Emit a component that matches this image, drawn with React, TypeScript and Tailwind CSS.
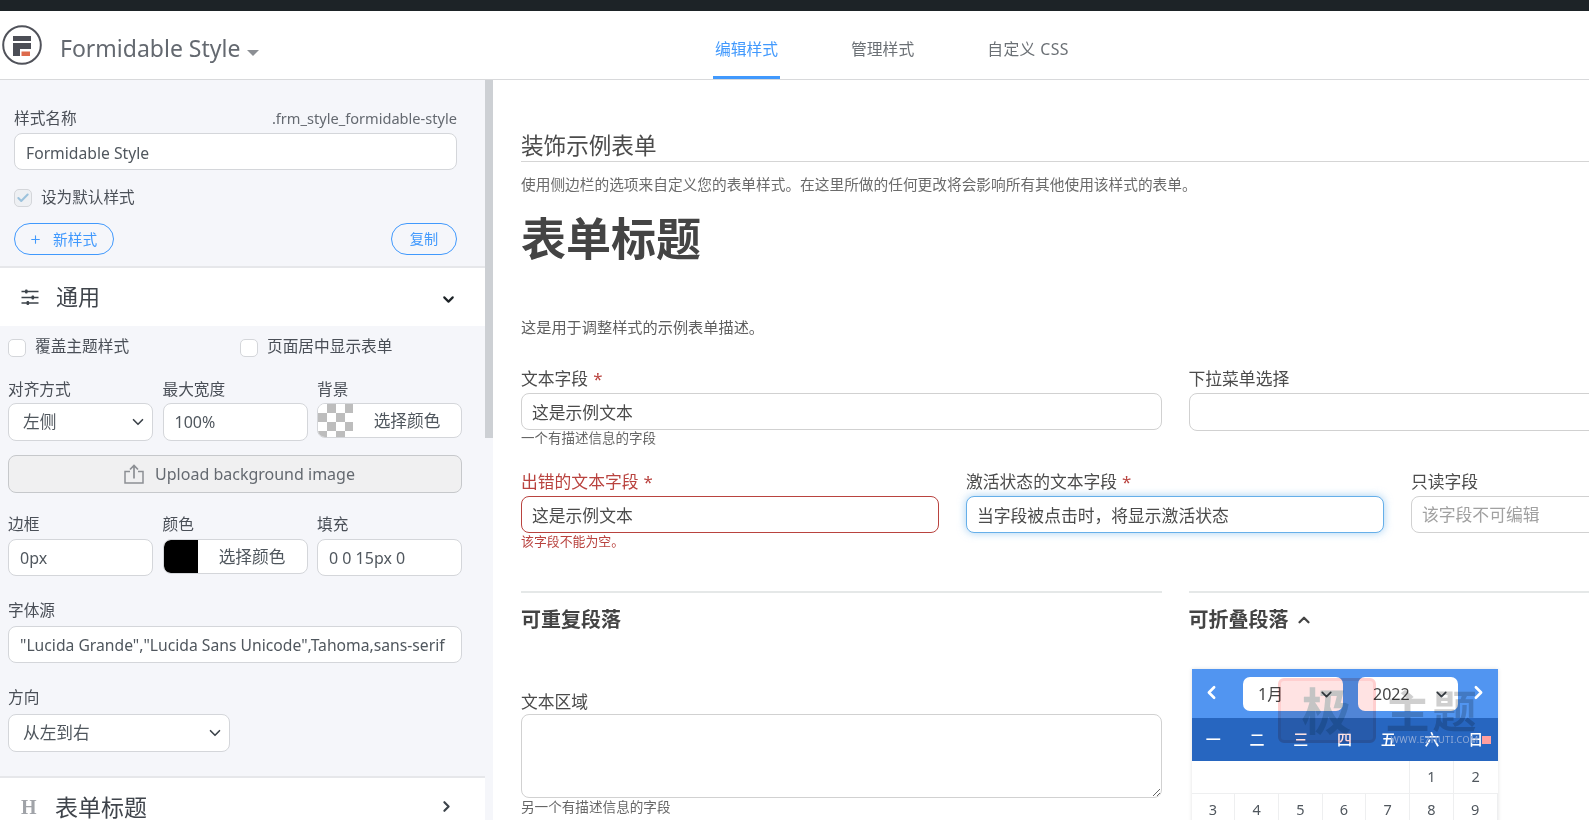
import React from "react";
import { ChevronDown, ChevronLeft, ChevronRight, ChevronUp, Check, Plus } from "lucide-react";

const inputCls =
  "block w-full rounded-[8px] border border-[#d4d6da] bg-white px-[11px] text-[#50575e] outline-none";

function SideLabel({ children }: { children: React.ReactNode }) {
  return <div className="h-[20px] text-[15.7px] leading-[20px] text-[#4a4f57]">{children}</div>;
}

function SideSelect({ value, className = "" }: { value: string; className?: string }) {
  return (
    <div className={`relative ${className}`}>
      <select className="block h-[38px] w-full appearance-none rounded-[8px] border border-[#d4d6da] bg-white pl-[14px] text-[16.7px] text-[#50575e] outline-none">
        <option>{value}</option>
      </select>
      <ChevronDown className="pointer-events-none absolute right-[6px] top-[10px] h-[18px] w-[18px] text-[#3c434a]" strokeWidth={2.2} />
    </div>
  );
}

function ColorPick({ swatch }: { swatch: React.ReactNode }) {
  return (
    <div className="flex h-[35px] items-stretch overflow-hidden rounded-[8px] border border-[#d4d6da] bg-white">
      {swatch}
      <div className="flex flex-1 items-center justify-center text-[16.7px] text-[#50575e]">选择颜色</div>
    </div>
  );
}

function EmptyBox() {
  return <span className="mt-[1px] block h-[18px] w-[18px] shrink-0 rounded-[5px] border border-[#d4d6da] bg-white" />;
}

function SlidersIcon() {
  return (
    <svg width="18" height="16" viewBox="0 0 18 16" fill="none" className="shrink-0 text-[#3c434a]">
      <path d="M0.5 2.5H17.5M0.5 8.5H17.5M0.5 14H17.5" stroke="currentColor" strokeWidth="1.3" />
      <rect x="4" y="0.5" width="2.6" height="4" rx="1" fill="currentColor" />
      <rect x="10.5" y="6.5" width="2.6" height="4" rx="1" fill="currentColor" />
      <rect x="5.5" y="12" width="2.6" height="4" rx="1" fill="currentColor" />
    </svg>
  );
}

function UploadIcon() {
  return (
    <svg width="20" height="20" viewBox="0 0 20 20" fill="none" className="text-[#8c8f94]">
      <path d="M6 7.5H1V19H19V7.5H14" stroke="currentColor" strokeWidth="1.5" />
      <path d="M10 14.5V1.5M6 5.5L10 1.5L14 5.5" stroke="currentColor" strokeWidth="1.7" />
    </svg>
  );
}

function Logo() {
  return (
    <svg width="40" height="40" viewBox="0 0 40 40" fill="none" className="shrink-0">
      <circle cx="20" cy="20" r="18.8" stroke="#50525a" strokeWidth="2" />
      <rect x="11" y="11" width="18" height="5" fill="#4c4e56" />
      <path d="M11 18H29V24H18V31H11Z" fill="#4c4e56" />
      <rect x="19.5" y="26.5" width="8.5" height="4.5" fill="#dd6a4c" />
    </svg>
  );
}

function MainLabel({ children, required, error }: { children: React.ReactNode; required?: boolean; error?: boolean }) {
  return (
    <div className={`h-[24px] text-[16.8px] leading-[24px] ${error ? "text-[#b9433f]" : "text-[#4b4b4b]"}`}>
      {children}
      {required && <span className="ml-[5px] text-[#b9433f]">*</span>}
    </div>
  );
}

const mainInput =
  "mt-[2px] block w-full rounded-[8px] border bg-white px-[10px] text-[16.8px] text-[#4b4b4b] outline-none placeholder:text-[#a1a1a1]";

const weekdays = ["一", "二", "三", "四", "五", "六", "日"];
const row1 = ["", "", "", "", "", "1", "2"];
const row2 = ["3", "4", "5", "6", "7", "8", "9"];

function Calendar() {
  return (
    <div className="relative mt-[35px] w-[306px] shadow-[0_0_4px_rgba(0,0,0,0.12)]">
      <div className="relative flex h-[49px] items-start justify-center gap-[15px] bg-[#5195f1] pl-[12px] pt-[8px]">
        <ChevronLeft className="absolute left-[9px] top-[13px] h-[21px] w-[21px] text-white" strokeWidth={3} />
        <div className="flex h-[34px] w-[100px] items-center justify-between rounded-[7px] bg-white pl-[15px] pr-[8px] text-[16px] text-[#444]">
          1月
          <ChevronDown className="h-[17px] w-[17px] text-[#3c434a]" strokeWidth={2.4} />
        </div>
        <div className="flex h-[34px] w-[100px] items-center justify-between rounded-[7px] bg-white pl-[15px] pr-[8px] text-[16px] text-[#444]">
          2022
          <ChevronDown className="h-[17px] w-[17px] text-[#3c434a]" strokeWidth={2.4} />
        </div>
        <ChevronRight className="absolute right-[9px] top-[13px] h-[21px] w-[21px] text-white" strokeWidth={3} />
      </div>
      <div className="grid h-[43px] grid-cols-7 items-center bg-[#2766c0] text-center text-[15px] font-medium text-white">
        {weekdays.map((d) => (
          <div key={d}>{d}</div>
        ))}
      </div>
      <div className="grid grid-cols-7 bg-white text-center text-[14.5px] text-[#50575e]">
        {row1.map((d, i) => (
          <div
            key={i}
            className={`flex h-[33px] items-center justify-center border-b border-[#eeeff0] ${i >= 4 && i < 6 ? "border-r" : ""}`}
          >
            {d}
          </div>
        ))}
        {row2.map((d) => (
          <div key={d} className="flex h-[33px] items-center justify-center border-b border-r border-[#eeeff0]">
            {d}
          </div>
        ))}
      </div>
      {/* site watermark laid over the calendar */}
      <div className="pointer-events-none absolute left-[86px] top-[9px] flex h-[65px] w-[98px] items-center justify-center rounded-[6px] border-[3px] border-[#ffcfcf] bg-[#ffe3e3] mix-blend-multiply">
        <span className="text-[50px] font-bold leading-[56px] text-[#c4c4c4]">极</span>
      </div>
      <div className="pointer-events-none absolute left-[194px] top-[19px] flex gap-[3px] text-[44px] font-bold leading-[46px] text-[#cfcfcf] mix-blend-multiply">
        <span>主</span>
        <span>题</span>
      </div>
      <div className="pointer-events-none absolute left-[199px] top-[66px] flex items-center gap-[3px] text-[9px] leading-[10px] tracking-[0.5px] text-[#8fa9d6]">
        WWW.EZHUTI.COM
        <span className="h-[8px] w-[9px] bg-[#ff9f9f]" />
      </div>
    </div>
  );
}

export default function App() {
  return (
    <div className="flex h-[820px] w-full flex-col overflow-hidden bg-white font-['Noto_Sans','Noto_Sans_CJK_SC',sans-serif]">
      <div className="h-[11px] shrink-0 bg-[#1d2327]" />

      <header className="relative flex h-[69px] shrink-0 items-center border-b border-[#d8d9db] bg-white pl-[2px]">
        <Logo />
        <span className="ml-[18px] mt-[6px] text-[23px] leading-[32px] text-[#646970]">Formidable Style</span>
        <svg width="12" height="6" viewBox="0 0 12 6" className="ml-[7px] mt-[15px] text-[#8c8f94]">
          <path d="M0 0H12L6 6Z" fill="currentColor" />
        </svg>
        <nav className="absolute bottom-0 left-[713px] flex gap-[71px] text-[15.8px] text-[#6b7075]">
          <span className="h-[51px] w-[67px] border-b-[3px] border-[#4199fd] pt-[9px] text-center leading-[24px] text-[#4199fd]">编辑样式</span>
          <span className="h-[51px] pt-[9px] leading-[24px]">管理样式</span>
          <span className="ml-[2px] h-[51px] pt-[9px] leading-[24px] tracking-[0.4px]">自定义 CSS</span>
        </nav>
      </header>

      <div className="flex min-h-0 flex-1">
        <aside className="relative w-[493px] shrink-0 overflow-hidden bg-[#f5f6fa]">
          <div className="absolute right-0 top-0 h-[358px] w-[8px] bg-[#cdd0d4]" />
          <div className="w-[485px]">
            <div className="pl-[14px] pr-[28px] pt-[28px]">
              <div className="flex h-[20px] items-center justify-between text-[15.7px] leading-[20px] text-[#4a4f57]">
                <span>样式名称</span>
                <span className="text-[14.6px] text-[#646970]">.frm_style_formidable-style</span>
              </div>
              <input readOnly defaultValue="Formidable Style" className={`${inputCls} mt-[5px] h-[37px] pt-[2px] text-[15.7px]`} />
              <label className="mt-[19px] flex h-[18px] items-center gap-[9px] text-[15.6px] text-[#4a4f57]">
                <span className="flex h-[18px] w-[18px] items-center justify-center rounded-[5px] border border-[#d4d6da] bg-[#eef0f3]">
                  <Check className="h-[14px] w-[14px] text-[#9cc2dc]" strokeWidth={3.5} />
                </span>
                设为默认样式
              </label>
              <div className="mt-[16px] flex h-[32px] justify-between">
                <button className="flex w-[100px] items-center gap-[11px] rounded-full border border-[#4199fd] pl-[14px] text-[14.7px] text-[#4199fd]">
                  <Plus className="h-[13px] w-[13px]" strokeWidth={2} />
                  新样式
                </button>
                <button className="w-[66px] rounded-full border border-[#4199fd] text-[14.2px] text-[#4199fd]">复制</button>
              </div>
            </div>

            <div className="mt-[11px] h-[2px] bg-[#e6e7ea]" />
            <div className="flex h-[58px] items-center bg-white pl-[21px] pr-[28px]">
              <SlidersIcon />
              <span className="-mt-[3px] ml-[17px] flex-1 text-[22px] leading-[30px] text-[#3f444b]">通用</span>
              <ChevronDown className="mt-[5px] h-[17px] w-[17px] text-[#1d2327]" strokeWidth={3} />
            </div>

            <div className="w-[469px] pl-[8px] pt-[12px]">
              <div className="flex h-[18px] items-center">
                <label className="flex w-[232px] items-center gap-[9px] text-[15.7px] text-[#4a4f57]">
                  <EmptyBox />
                  覆盖主题样式
                </label>
                <label className="flex items-center gap-[9px] text-[15.7px] text-[#4a4f57]">
                  <EmptyBox />
                  页面居中显示表单
                </label>
              </div>

              <div className="mt-[23px] grid w-[454px] grid-cols-3 gap-x-[9.5px]">
                <div className="flex flex-col gap-[4px]">
                  <SideLabel>对齐方式</SideLabel>
                  <SideSelect value="左侧" />
                </div>
                <div className="flex flex-col gap-[4px]">
                  <SideLabel>最大宽度</SideLabel>
                  <input readOnly defaultValue="100%" className={`${inputCls} h-[38px] text-[16px]`} />
                </div>
                <div className="flex flex-col gap-[4px]">
                  <SideLabel>背景</SideLabel>
                  <ColorPick
                    swatch={
                      <span className="w-[35px] shrink-0 bg-[repeating-conic-gradient(#bdbdbd_0_25%,#ffffff_0_50%)] bg-[length:18px_18px]" />
                    }
                  />
                </div>
              </div>

              <button className="mt-[14px] flex h-[38px] w-[454px] items-center justify-center gap-[11px] rounded-[8px] border border-[#c6c8cb] bg-[#f0f0f1] pl-[9px] text-[16px] text-[#646970]">
                <UploadIcon />
                Upload background image
              </button>

              <div className="mt-[21px] grid w-[454px] grid-cols-3 gap-x-[9.5px]">
                <div className="flex flex-col gap-[5px]">
                  <SideLabel>边框</SideLabel>
                  <input readOnly defaultValue="0px" className={`${inputCls} h-[37px] text-[16px]`} />
                </div>
                <div className="flex flex-col gap-[5px]">
                  <SideLabel>颜色</SideLabel>
                  <ColorPick swatch={<span className="w-[34px] shrink-0 rounded-l-[6px] bg-black" />} />
                </div>
                <div className="flex flex-col gap-[5px]">
                  <SideLabel>填充</SideLabel>
                  <input readOnly defaultValue="0 0 15px 0" className={`${inputCls} h-[37px] text-[16px]`} />
                </div>
              </div>

              <div className="mt-[24px] w-[454px]">
                <SideLabel>字体源</SideLabel>
                <input
                  readOnly
                  defaultValue={'"Lucida Grande","Lucida Sans Unicode",Tahoma,sans-serif'}
                  className={`${inputCls} mt-[6px] h-[37px] text-[15.7px]`}
                />
              </div>

              <div className="mt-[24px]">
                <SideLabel>方向</SideLabel>
                <div className="mt-[7px]">
                  <SideSelect value="从左到右" className="w-[222px]" />
                </div>
              </div>
            </div>

            <div className="mt-[24px] h-[2px] bg-[#e6e7ea]" />
            <div className="flex h-[57px] items-center bg-white pl-[21px] pr-[30px]">
              <span className="w-[16px] font-['Liberation_Serif',serif] text-[20px] font-bold leading-[24px] text-[#a0a3a8]">H</span>
              <span className="ml-[18px] flex-1 text-[23px] leading-[30px] text-[#3f444b]">表单标题</span>
              <ChevronRight className="h-[17px] w-[17px] text-[#3c434a]" strokeWidth={3} />
            </div>
          </div>
        </aside>

        <main className="min-w-0 flex-1 overflow-hidden pl-[28px]">
          <div className="w-[1308px]">
            <div className="mt-[51px] h-[31px] border-b border-[#d5d5d5] text-[22.6px] leading-[30px] text-[#4b4b4b]">装饰示例表单</div>
            <p className="mt-[12px] h-[20px] whitespace-nowrap text-[14.7px] leading-[20px] text-[#6b6b6b]">
              使用侧边栏的选项来自定义您的表单样式。在这里所做的任何更改将会影响所有其他使用该样式的表单。
            </p>
            <h1 className="mt-[15px] h-[60px] text-[45px] font-bold leading-[60px] text-[#444]">表单标题</h1>
            <p className="mt-[47px] h-[22px] text-[15.2px] leading-[22px] text-[#5f5f5f]">这是用于调整样式的示例表单描述。</p>

            <div className="mt-[29px] grid grid-cols-2 gap-x-[27px]">
              <div>
                <MainLabel required>文本字段</MainLabel>
                <input readOnly defaultValue="这是示例文本" className={`${mainInput} h-[37px] border-[#d1d1d1]`} />
                <div className="-mt-[1px] h-[18px] text-[13.5px] leading-[18px] text-[#666]">一个有描述信息的字段</div>
              </div>
              <div>
                <MainLabel>下拉菜单选择</MainLabel>
                <select className={`${mainInput} h-[38px] appearance-none border-[#d1d1d1]`} />
              </div>
            </div>

            <div className="mt-[23px] grid grid-cols-3 gap-x-[27px]">
              <div>
                <MainLabel required error>出错的文本字段</MainLabel>
                <input readOnly defaultValue="这是示例文本" className={`${mainInput} h-[37px] border-[#b9433f]`} />
                <div className="h-[18px] text-[12.9px] leading-[16px] text-[#b9433f]">该字段不能为空。</div>
              </div>
              <div>
                <MainLabel required>激活状态的文本字段</MainLabel>
                <input
                  readOnly
                  defaultValue="当字段被点击时，将显示激活状态"
                  className={`${mainInput} h-[37px] border-[#66afe9] shadow-[0_0_8px_rgba(102,175,233,0.6)]`}
                />
              </div>
              <div>
                <MainLabel>只读字段</MainLabel>
                <input readOnly placeholder="该字段不可编辑" className={`${mainInput} h-[37px] border-[#d1d1d1]`} />
              </div>
            </div>

            <div className="mt-[40px] grid grid-cols-2 gap-x-[27px]">
              <div className="border-t-2 border-[#e5e8e8]">
                <div className="mt-[13px] h-[28px] text-[20px] font-bold leading-[28px] text-[#444]">可重复段落</div>
                <div className="mt-[56px]">
                  <MainLabel>文本区域</MainLabel>
                  <textarea readOnly className="block h-[84px] w-full rounded-[8px] border border-[#d1d1d1] bg-white outline-none" />
                  <div className="h-[18px] text-[13.6px] leading-[18px] text-[#666]">另一个有描述信息的字段</div>
                </div>
              </div>
              <div className="border-t-2 border-[#e5e8e8]">
                <div className="mt-[13px] flex h-[28px] items-center gap-[6px] text-[20px] font-bold leading-[28px] text-[#444]">
                  可折叠段落
                  <ChevronUp className="h-[18px] w-[18px] text-[#444]" strokeWidth={3} />
                </div>
                <div className="ml-[3px]">
                  <Calendar />
                </div>
              </div>
            </div>
          </div>
        </main>
      </div>
    </div>
  );
}
